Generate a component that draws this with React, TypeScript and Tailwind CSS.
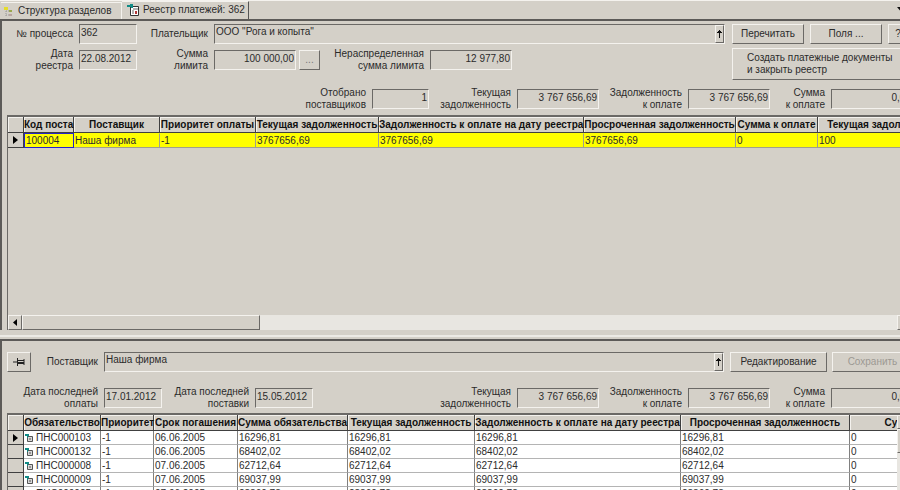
import type { ReactNode } from "react";

const raised = "border border-t-[#f4f2ee] border-l-[#f4f2ee] border-b-[#6b6966] border-r-[#6b6966] bg-[#d4d0c8]";
const sunken = "border border-t-[#6b6966] border-l-[#6b6966] border-b-[#f4f2ee] border-r-[#f4f2ee] bg-[#d4d0c8]";

const supplierCols = [
  { title: "Код поста", width: "w-[50px]" },
  { title: "Поставщик", width: "w-[86px]" },
  { title: "Приоритет оплаты", width: "w-[96px]" },
  { title: "Текущая задолженность", width: "w-[123px]" },
  { title: "Задолженность к оплате на дату реестра", width: "w-[205px]" },
  { title: "Просроченная задолженность", width: "w-[152px]" },
  { title: "Сумма к оплате", width: "w-[82px]" },
  { title: "Текущая задолженность", width: "w-[140px]" },
];
const supplierRow = ["100004", "Наша фирма", "-1", "3767656,69", "3767656,69", "3767656,69", "0", "100"];

const debtCols = [
  { title: "Обязательство", width: "w-[77px]" },
  { title: "Приоритет", width: "w-[53px]" },
  { title: "Срок погашения", width: "w-[84px]" },
  { title: "Сумма обязательства", width: "w-[110px]" },
  { title: "Текущая задолженность", width: "w-[127px]" },
  { title: "Задолженность к оплате на дату реестра", width: "w-[206px]" },
  { title: "Просроченная задолженность", width: "w-[169px]" },
  { title: "Сумма к оплате", width: "w-[148px]" },
];
const debts = [
  { code: "ПНС000103", date: "06.06.2005", sum: "16296,81" },
  { code: "ПНС000132", date: "06.06.2005", sum: "68402,02" },
  { code: "ПНС000008", date: "07.06.2005", sum: "62712,64" },
  { code: "ПНС000009", date: "07.06.2005", sum: "69037,99" },
  { code: "ПНС000025", date: "07.06.2005", sum: "28360,78" },
];

function Field({ id, label, value, labelWidth, width, right }: {
  id: string; label: ReactNode; value: string; labelWidth: string; width: string; right?: boolean;
}) {
  return (
    <div className="flex h-5 shrink-0 items-center gap-1.5">
      <label htmlFor={id} className={`${labelWidth} shrink-0 text-right leading-3 whitespace-nowrap`}>{label}</label>
      <input id={id} readOnly defaultValue={value}
        className={`${sunken} ${width} h-5 shrink-0 px-px pb-1 leading-3 outline-none ${right ? "text-right" : ""}`} />
    </div>
  );
}

function Lookup({ id, label, value, labelWidth }: { id: string; label: string; value: string; labelWidth: string }) {
  return (
    <div className="flex h-5 flex-1 items-center gap-1.5">
      <label htmlFor={id} className={`${labelWidth} shrink-0 text-right whitespace-nowrap`}>{label}</label>
      <div className={`${sunken} flex h-5 flex-1`}>
        <input id={id} readOnly defaultValue={value} className="min-w-0 flex-1 px-px pb-1 outline-none" />
        <button type="button" aria-label="Выбрать" className={`${raised} flex w-[9px] items-center justify-center`}>
          <svg className="shrink-0" width="5" height="8" viewBox="0 0 5 8" shapeRendering="crispEdges"><path d="M2 0h1v8H2zM1 1h3v1H1zM0 2h5v1H0z" fill="#111" /></svg>
        </button>
      </div>
    </div>
  );
}

function HeadRow({ cols }: { cols: { title: string; width: string }[] }) {
  return (
    <thead>
      <tr className="h-4">
        <th className="w-4 border-r border-b border-[#404040] shadow-[inset_1px_1px_0_#f4f2ee]" aria-label="Строка" />
        {cols.map((c, i) => (
          <th key={i} className={`${c.width} border-r border-b border-[#404040] p-0 text-center leading-3 font-bold whitespace-nowrap text-[#111] shadow-[inset_1px_1px_0_#f4f2ee]`}>{c.title}</th>
        ))}
      </tr>
    </thead>
  );
}

function Marker() {
  return <svg className="mx-auto block" width="5" height="8" viewBox="0 0 5 8"><path d="M0 0L5 4L0 8z" fill="#000" /></svg>;
}

function Totals({ prefix }: { prefix: string }) {
  return (
    <>
      <Field id={prefix + "-debt"} label={<>Текущая<br />задолженность</>} value="3 767 656,69" labelWidth="w-[82px]" width="w-[82px]" right />
      <Field id={prefix + "-pay"} label={<>Задолженность<br />к оплате</>} value="3 767 656,69" labelWidth="w-[83px]" width="w-[82px]" right />
      <Field id={prefix + "-sum"} label={<>Сумма<br />к оплате</>} value="0,00" labelWidth="w-[55px]" width="w-[82px]" right />
    </>
  );
}

export default function App() {
  return (
    <div className="h-screen overflow-hidden bg-[#d4d0c8] font-['Liberation_Sans',sans-serif] text-[10px] leading-3 text-[#2b2b2b]">
      <div className="flex min-w-[920px] flex-col">
        <nav className="flex h-[19px] items-end border-t border-[#f4f2ee] pl-px">
          <button type="button" className="flex h-[17px] w-[121px] items-center gap-1 border-t border-r border-[#f4f2ee] pl-[3px] whitespace-nowrap">
            <svg className="shrink-0" width="10" height="11" viewBox="0 0 10 11">
              <path d="M0 1h4v3H0z" fill="#e4dc2c" /><path d="M2 5v5M2 5h3M2 9h3" stroke="#999" fill="none" strokeDasharray="1 1" />
              <path d="M5 4h3v2H5z" fill="#9aa84c" /><path d="M5 8h3v2H5z" fill="#b9a4a0" />
            </svg>
            Структура разделов
          </button>
          <button type="button" className="flex h-[18px] w-[127px] items-center gap-1 border-t border-r border-t-[#f4f2ee] border-r-[#555] pb-0.5 pl-[5px] whitespace-nowrap">
            <svg className="shrink-0" width="12" height="12" viewBox="0 0 12 12">
              <path d="M3.5 2.5h8v9h-8z" fill="#fff" stroke="#333" /><path d="M6 5h5M5 7h2M5 9h2" stroke="#666" />
              <path d="M8 7h2v3H8z" fill="#b33636" /><path d="M0 1h3V0h3v4H4V3H0z" fill="#108b86" />
            </svg>
            Реестр платежей: 362
          </button>
          <button type="button" aria-label="Список вкладок" className="mr-4 mb-2 ml-auto">
            <svg width="7" height="4" viewBox="0 0 7 4"><path d="M0 0h7L3.500 4z" fill="#111" /></svg>
          </button>
        </nav>

        <section className="flex flex-col border-t-2 border-l-2 border-[#5c5a58] pr-[7px] pl-[5px]">
          <div className="flex gap-[7px] pt-[3px]">
            <div className="flex flex-1 flex-col gap-1.5">
              <div className="flex">
                <Field id="process" label="№ процесса" value="362" labelWidth="w-[66px]" width="w-[58px]" />
                <Lookup id="payer" label="Плательщик" value={'ООО "Рога и копыта"'} labelWidth="w-[71px]" />
              </div>
              <div className="flex">
                <Field id="date" label={<>Дата<br />реестра</>} value="22.08.2012" labelWidth="w-[66px]" width="w-[58px]" />
                <Field id="limit" label={<>Сумма<br />лимита</>} value="100 000,00" labelWidth="w-[71px]" width="w-[82px]" right />
                <button type="button" className={`${raised} ml-[3px] h-5 w-[21px] text-[#777]`}>...</button>
                <Field id="rest" label={<>Нераспределенная<br />сумма лимита</>} value="12 977,80" labelWidth="w-[104px]" width="w-[82px]" right />
              </div>
            </div>
            <div className="flex w-[181px] flex-col gap-1">
              <div className="flex gap-1.5">
                <button type="button" className={`${raised} h-5 w-[72px]`}>Перечитать</button>
                <button type="button" className={`${raised} h-5 w-[72px]`}>Поля ...</button>
                <button type="button" className={`${raised} h-5 w-5`}>?</button>
              </div>
              <button type="button" className={`${raised} h-8 pl-[14px] text-left whitespace-nowrap`}>Создать платежные документы<br />и закрыть реестр</button>
            </div>
          </div>
          <div className="mt-[9px] flex justify-end">
            <Field id="selected" label={<>Отобрано<br />поставщиков</>} value="1" labelWidth="w-[83px]" width="w-[57px]" right />
            <Totals prefix="top" />
          </div>

          <div className="mt-1.5 flex h-[215px] flex-col overflow-hidden border-t-2 border-l border-[#6b6966]">
            <div className="flex-1 overflow-hidden">
              <table className="w-[950px] table-fixed border-separate border-spacing-0">
                <HeadRow cols={supplierCols} />
                <tbody>
                  <tr className="h-[15px]">
                    <td className="border-r border-b border-[#404040] p-0"><Marker /></td>
                    {supplierRow.map((v, i) => (
                      <td key={i} className={`bg-[#ffff00] px-px py-0 leading-3 whitespace-nowrap ${i === 0 ? "border border-[#2424c8]" : "border-t border-r border-b border-t-[#ffff00] border-r-[#a0a08c] border-b-[#a0a08c]"}`}>{v}</td>
                    ))}
                  </tr>
                </tbody>
              </table>
            </div>
            <div className="flex h-[15px] bg-[#e8e6e1]">
              <button type="button" aria-label="Влево" className={`${raised} flex w-[14px] items-center justify-center`}>
                <svg width="4" height="7" viewBox="0 0 4 7"><path d="M4 0v7L0 3.500z" fill="#000" /></svg>
              </button>
              <div className={`${raised} w-[238px]`} />
              <button type="button" aria-label="Вправо" className={`${raised} ml-auto flex w-4 items-center justify-center`}>
                <svg width="4" height="7" viewBox="0 0 4 7"><path d="M0 0v7L4 3.500z" fill="#000" /></svg>
              </button>
            </div>
          </div>
        </section>

        <div className="mt-[5px] h-1 border-t-2 border-[#eceae5]" />

        <section className="flex flex-col border-t-2 border-l-2 border-[#5c5a58] pr-[7px] pl-[5px]">
          <div className="flex items-center pt-[11px]">
            <button type="button" aria-label="Закрепить" className={`${raised} flex h-5 w-6 items-center justify-center`}>
              <svg width="12" height="8" viewBox="0 0 12 8">
                <path d="M0 4h4M4.500 0v8M11 1v6M5 2.500h6" stroke="#222" fill="none" /><path d="M5 4h6v2H5z" fill="#222" />
              </svg>
            </button>
            <Lookup id="supplier" label="Поставщик" value="Наша фирма" labelWidth="w-[67px]" />
            <button type="button" className={`${raised} ml-1.5 h-5 w-[97px]`}>Редактирование</button>
            <button type="button" disabled className={`${raised} ml-[5px] h-5 w-[81px] text-[#9c9993]`}>Сохранить</button>
          </div>
          <div className="mt-4 flex justify-between">
            <div className="flex">
              <Field id="last-pay" label={<>Дата последней<br />оплаты</>} value="17.01.2012" labelWidth="w-[91px]" width="w-[58px]" />
              <Field id="last-supply" label={<>Дата последней<br />поставки</>} value="15.05.2012" labelWidth="w-[87px]" width="w-[58px]" />
            </div>
            <div className="flex"><Totals prefix="bottom" /></div>
          </div>

          <div className="mt-[5px] flex overflow-hidden border-t-2 border-l border-[#6b6966]">
            <div className="flex-1 overflow-hidden">
              <table className="w-[990px] table-fixed border-separate border-spacing-0">
                <HeadRow cols={debtCols} />
                <tbody>
                  {debts.map((d, r) => (
                    <tr key={d.code} className="h-[14px]">
                      <td className="border-r border-b border-[#404040] p-0">{r === 0 && <Marker />}</td>
                      {[d.code, "-1", d.date, d.sum, d.sum, d.sum, d.sum, "0"].map((v, i) => (
                        <td key={i} className="border-r border-b border-r-[#808080] border-b-[#b4b4b4] bg-white px-px py-0 leading-3 whitespace-nowrap">
                          <span className="flex items-center gap-[3px]">
                            {i === 0 && (
                              <svg width="8" height="8" viewBox="0 0 8 8">
                                <path d="M2.500 2.500h5v5h-5z" stroke="#555" fill="#d8d8d8" /><path d="M4 5h2" stroke="#555" />
                                <path d="M0 0h4v2H3v2H2V2H0z" fill="#108b86" />
                              </svg>
                            )}
                            {v}
                          </span>
                        </td>
                      ))}
                    </tr>
                  ))}
                </tbody>
              </table>
            </div>
            <div className="flex w-4 flex-col bg-[#e8e6e1]">
              <button type="button" aria-label="Вверх" className={`${raised} h-[14px]`} />
              <div className={`${raised} h-6`} />
            </div>
          </div>
        </section>
      </div>
    </div>
  );
}
